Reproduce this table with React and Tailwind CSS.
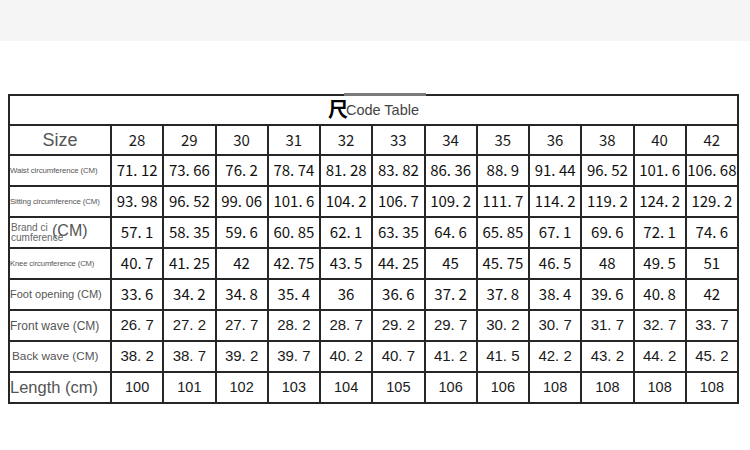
const sizes = ["28", "29", "30", "31", "32", "33", "34", "35", "36", "38", "40", "42"];

const rows = [
  {
    label: "Waist circumference (CM)",
    labelClass: "text-[7.8px] tracking-[-0.1px]",
    font: "cjk",
    values: ["71. 12", "73. 66", "76. 2", "78. 74", "81. 28", "83. 82", "86. 36", "88. 9", "91. 44", "96. 52", "101. 6", "106. 68"],
  },
  {
    label: "Sitting circumference (CM)",
    labelClass: "text-[7.8px] tracking-[-0.1px]",
    font: "cjk",
    values: ["93. 98", "96. 52", "99. 06", "101. 6", "104. 2", "106. 7", "109. 2", "111. 7", "114. 2", "119. 2", "124. 2", "129. 2"],
  },
  {
    label: "brand",
    font: "cjk",
    values: ["57. 1", "58. 35", "59. 6", "60. 85", "62. 1", "63. 35", "64. 6", "65. 85", "67. 1", "69. 6", "72. 1", "74. 6"],
  },
  {
    label: "Knee circumference (CM)",
    labelClass: "text-[7.6px] tracking-[-0.1px]",
    font: "cjk",
    values: ["40. 7", "41. 25", "42", "42. 75", "43. 5", "44. 25", "45", "45. 75", "46. 5", "48", "49. 5", "51"],
  },
  {
    label: "Foot opening (CM)",
    labelClass: "text-[11px]",
    font: "cjk",
    values: ["33. 6", "34. 2", "34. 8", "35. 4", "36", "36. 6", "37. 2", "37. 8", "38. 4", "39. 6", "40. 8", "42"],
  },
  {
    label: "Front wave (CM)",
    labelClass: "text-[12px]",
    font: "sans",
    values: ["26. 7", "27. 2", "27. 7", "28. 2", "28. 7", "29. 2", "29. 7", "30. 2", "30. 7", "31. 7", "32. 7", "33. 7"],
  },
  {
    label: "Back wave (CM)",
    labelClass: "text-[11.8px] pl-[2px]",
    font: "sans",
    values: ["38. 2", "38. 7", "39. 2", "39. 7", "40. 2", "40. 7", "41. 2", "41. 5", "42. 2", "43. 2", "44. 2", "45. 2"],
  },
  {
    label: "Length (cm)",
    labelClass: "text-[16.5px] text-[#333]",
    font: "length",
    values: ["100", "101", "102", "103", "104", "105", "106", "106", "108", "108", "108", "108"],
  },
];

const cell = "border-2 border-[#262626] p-0";

const numFont = {
  cjk: "font-['Noto_Sans_CJK_SC',sans-serif] text-[15px] text-[#111]",
  sans: "font-['Liberation_Sans',sans-serif] text-[15px] text-[#1a1a1a]",
  length: "font-['Liberation_Sans',sans-serif] text-[14.5px] text-[#1a1a1a]",
};

const Label = ({ row }) => {
  if (row.label === "brand") {
    return (
      <td className={`${cell} relative`}>
        <div className="pl-[1px] text-[10px] leading-[10px] text-[#666] font-['Liberation_Sans',sans-serif]">
          <div>Brand ci</div>
          <div>cumference</div>
        </div>
        <span className="absolute left-[42px] top-[3px] text-[16px] leading-[20px] text-[#555] font-['Liberation_Sans',sans-serif]">
          (CM)
        </span>
      </td>
    );
  }
  return (
    <td className={`${cell} text-left whitespace-nowrap overflow-hidden`}>
      <span className={`block font-['Liberation_Sans',sans-serif] text-[#555] ${row.labelClass}`}>{row.label}</span>
    </td>
  );
};

export default function App() {
  return (
    <div className="w-[750px] h-[450px] bg-white overflow-hidden">
      <div className="h-[41px] bg-[#f5f5f5]" />
      <div className="relative ml-[8px] mt-[53px] w-[731px]">
        <div className="absolute left-[336px] top-[-1px] w-[82px] h-[3px] bg-[#7a7a7a] z-10" />
        <table className="w-[731px] table-fixed border-collapse border-2 border-[#262626]">
          <colgroup>
            <col className="w-[102px]" />
            {sizes.map((s) => (
              <col key={s} />
            ))}
          </colgroup>
          <tbody>
            <tr className="h-[30px]">
              <td colSpan={13} className={`${cell} text-center`}>
                <span className="inline-flex items-end">
                  <span className="font-['Noto_Sans_CJK_SC',sans-serif] font-bold text-[20px] leading-[22px] text-black">尺</span>
                  <span className="font-['Liberation_Sans',sans-serif] text-[14.5px] leading-[20px] text-[#444] -ml-[2px]">
                    Code Table
                  </span>
                </span>
              </td>
            </tr>
            <tr className="h-[30px]">
              <td className={`${cell} text-center font-['Liberation_Sans',sans-serif] text-[18px] text-[#555]`}>Size</td>
              {sizes.map((s) => (
                <td key={s} className={`${cell} text-center font-['Noto_Sans_CJK_SC',sans-serif] text-[15px] text-[#1a1a1a]`}>
                  {s}
                </td>
              ))}
            </tr>
            {rows.map((row, i) => (
              <tr key={i} className="h-[31px]">
                <Label row={row} />
                {row.values.map((v, j) => (
                  <td key={j} className={`${cell} text-center whitespace-pre ${numFont[row.font]}`}>
                    {v}
                  </td>
                ))}
              </tr>
            ))}
          </tbody>
        </table>
      </div>
    </div>
  );
}
